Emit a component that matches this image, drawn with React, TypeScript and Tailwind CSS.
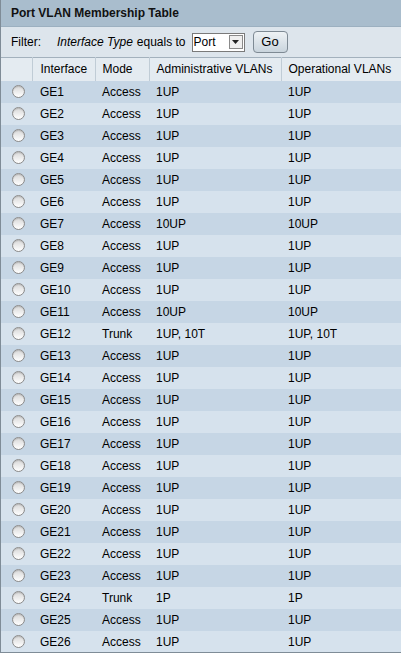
import React from "react";

const rows: [string, string, string, string][] = [
  ["GE1", "Access", "1UP", "1UP"],
  ["GE2", "Access", "1UP", "1UP"],
  ["GE3", "Access", "1UP", "1UP"],
  ["GE4", "Access", "1UP", "1UP"],
  ["GE5", "Access", "1UP", "1UP"],
  ["GE6", "Access", "1UP", "1UP"],
  ["GE7", "Access", "10UP", "10UP"],
  ["GE8", "Access", "1UP", "1UP"],
  ["GE9", "Access", "1UP", "1UP"],
  ["GE10", "Access", "1UP", "1UP"],
  ["GE11", "Access", "10UP", "10UP"],
  ["GE12", "Trunk", "1UP, 10T", "1UP, 10T"],
  ["GE13", "Access", "1UP", "1UP"],
  ["GE14", "Access", "1UP", "1UP"],
  ["GE15", "Access", "1UP", "1UP"],
  ["GE16", "Access", "1UP", "1UP"],
  ["GE17", "Access", "1UP", "1UP"],
  ["GE18", "Access", "1UP", "1UP"],
  ["GE19", "Access", "1UP", "1UP"],
  ["GE20", "Access", "1UP", "1UP"],
  ["GE21", "Access", "1UP", "1UP"],
  ["GE22", "Access", "1UP", "1UP"],
  ["GE23", "Access", "1UP", "1UP"],
  ["GE24", "Trunk", "1P", "1P"],
  ["GE25", "Access", "1UP", "1UP"],
  ["GE26", "Access", "1UP", "1UP"],
];

function Radio() {
  return (
    <div className="w-[13px] h-[13px] rounded-full border border-[#8a8a8a] bg-gradient-to-b from-[#d8d8d8] to-[#ffffff] shadow-[inset_0_1px_1px_rgba(0,0,0,0.15)]" />
  );
}

export default function App() {
  return (
    <div
      className="w-[401px] h-[653px] overflow-hidden bg-[#d5e1ec] text-[12px] text-black border-l border-b border-[#7f8c97] flex flex-col"
      style={{ fontFamily: '"Liberation Sans", Arial, sans-serif' }}
    >
      <div className="h-[27px] shrink-0 bg-[#a9bdcd] border-b border-[#9cb0c0] flex items-center pl-[10px] font-bold text-[12px] text-[#111]">
        Port VLAN Membership Table
      </div>
      <div className="h-[30px] shrink-0 bg-[#dde5ec] flex items-center pl-[10px]">
        <span>Filter:</span>
        <span className="italic ml-[16px]">Interface Type</span>
        <span className="ml-[4px]">equals to</span>
        <div className="ml-[6px] w-[53px] h-[19px] bg-white border border-[#7a7a7a] flex items-center justify-between pl-[1px] pr-[1px]">
          <span className="text-[12px]">Port</span>
          <div className="w-[14px] h-[14px] border border-[#8a8a8a] bg-[#efefef] flex items-center justify-center">
            <svg width="7" height="4" viewBox="0 0 7 4">
              <polygon points="0,0 7,0 3.5,4" fill="#222" />
            </svg>
          </div>
        </div>
        <div className="ml-[8px] w-[35px] h-[22px] rounded-[4px] border border-[#7e8a94] bg-gradient-to-b from-[#eef2f5] to-[#c9d4dd] flex items-center justify-center text-[13px]">
          Go
        </div>
      </div>
      <table className="border-collapse w-[400px] table-fixed">
        <colgroup>
          <col className="w-[31px]" />
          <col className="w-[63px]" />
          <col className="w-[54px]" />
          <col className="w-[132px]" />
          <col className="w-[120px]" />
        </colgroup>
        <thead>
          <tr className="h-[23px] bg-[#e4ebf1]">
            <th className="border-t border-[#a3b1bd] border-r border-r-[#c0ccd6]"></th>
            <th className="border-t border-[#a3b1bd] border-r border-r-[#c0ccd6] text-left font-normal pl-[8px]">Interface</th>
            <th className="border-t border-[#a3b1bd] border-r border-r-[#c0ccd6] text-left font-normal pl-[7px]">Mode</th>
            <th className="border-t border-[#a3b1bd] border-r border-r-[#c0ccd6] text-left font-normal pl-[7px]">Administrative VLANs</th>
            <th className="border-t border-[#a3b1bd] text-left font-normal pl-[7px]">Operational VLANs</th>
          </tr>
        </thead>
        <tbody>
          {rows.map((r, i) => (
            <tr key={r[0]} className={"h-[22px] " + (i % 2 === 0 ? "bg-[#c6d6e5]" : "bg-[#d6e2ed]")}>
              <td className="pl-[11px]"><Radio /></td>
              <td className="pl-[8px]">{r[0]}</td>
              <td className="pl-[7px]">{r[1]}</td>
              <td className="pl-[7px]">{r[2]}</td>
              <td className="pl-[7px]">{r[3]}</td>
            </tr>
          ))}
        </tbody>
      </table>
    </div>
  );
}
